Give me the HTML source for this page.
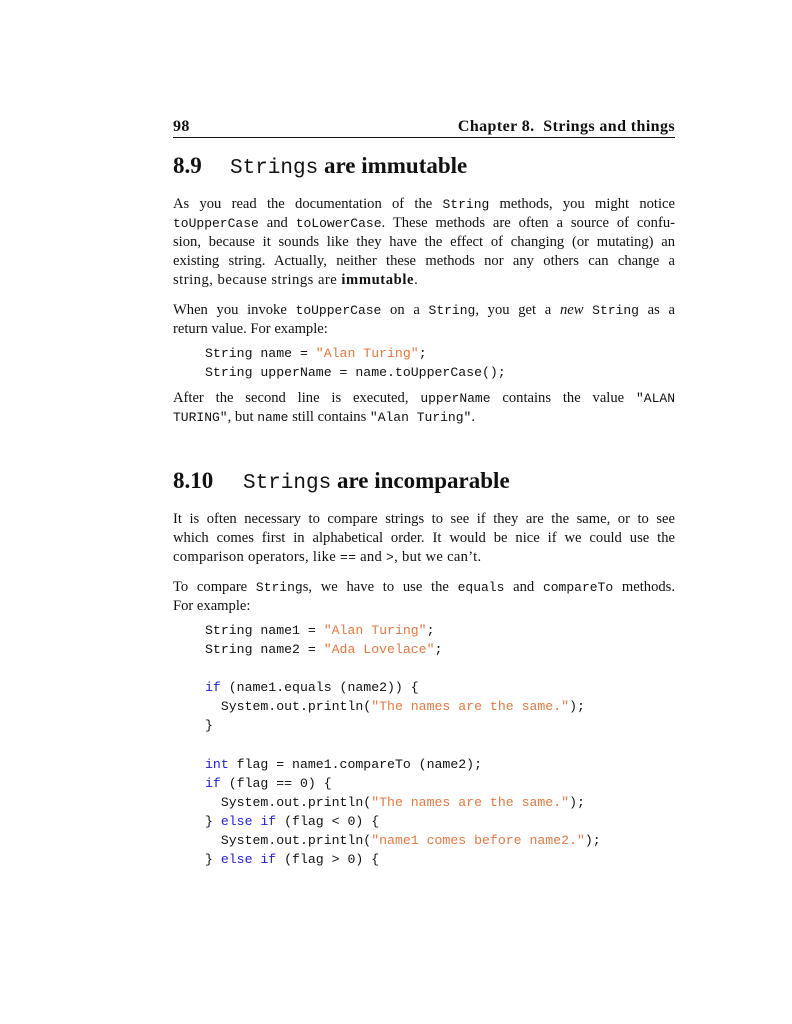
<!DOCTYPE html>
<html><head><meta charset="utf-8"><style>
html,body{margin:0;padding:0;background:#fff;}
body{width:792px;height:1024px;position:relative;overflow:hidden;color:#111;font-family:"Liberation Serif",serif;}
.l{position:absolute;left:173px;width:502px;height:19px;line-height:19px;font-size:14.6px;white-space:nowrap;}
.j{text-align:justify;text-align-last:justify;white-space:normal;}
code,.c{font-family:"Liberation Mono",monospace;font-size:13px;}
b{letter-spacing:0.6px;}
.c{position:absolute;left:205px;height:19px;line-height:19px;white-space:pre;font-size:13.2px;color:#111;}
.k{color:#2020e0;}
.s{color:#e8773f;}
.h{position:absolute;left:173px;font-weight:bold;font-size:23px;line-height:26px;white-space:pre;}
.h code{font-size:21px;font-weight:normal;}
</style></head><body>
<div class="l" style="top:117px;font-weight:bold;font-size:16px;letter-spacing:0.4px;"><span>98</span><span style="position:absolute;right:0">Chapter 8.&nbsp; Strings and things</span></div>
<div style="position:absolute;left:173px;width:502px;top:137px;height:1px;background:#111"></div>

<div class="h" style="top:153px;">8.9<span style="position:absolute;left:57px"><code>Strings</code> are immutable</span></div>

<div class="l j" style="top:195px;">As you read the documentation of the <code>String</code> methods, you might notice</div>
<div class="l j" style="top:214px;"><code>toUpperCase</code> and <code>toLowerCase</code>. These methods are often a source of confu-</div>
<div class="l j" style="top:233px;">sion, because it sounds like they have the effect of changing (or mutating) an</div>
<div class="l j" style="top:252px;">existing string. Actually, neither these methods nor any others can change a</div>
<div class="l" style="top:271px;letter-spacing:0.5px;">string, because strings are <b>immutable</b>.</div>

<div class="l j" style="top:301px;">When you invoke <code>toUpperCase</code> on a <code>String</code>, you get a <i>new</i> <code>String</code> as a</div>
<div class="l" style="top:320px;">return value. For example:</div>
<div class="c" style="top:344px;">String name = <span class="s">"Alan Turing"</span>;</div>
<div class="c" style="top:363px;">String upperName = name.toUpperCase();</div>
<div class="l j" style="top:389px;">After the second line is executed, <code>upperName</code> contains the value <code>"ALAN</code></div>
<div class="l" style="top:408px;"><code>TURING"</code>, but <code>name</code> still contains <code>"Alan Turing"</code>.</div>

<div class="h" style="top:468px;">8.10<span style="position:absolute;left:70px"><code>Strings</code> are incomparable</span></div>

<div class="l j" style="top:510px;">It is often necessary to compare strings to see if they are the same, or to see</div>
<div class="l j" style="top:529px;">which comes first in alphabetical order. It would be nice if we could use the</div>
<div class="l" style="top:548px;letter-spacing:0.3px;">comparison operators, like <code>==</code> and <code>&gt;</code>, but we can’t.</div>
<div class="l j" style="top:578px;">To compare <code>String</code>s, we have to use the <code>equals</code> and <code>compareTo</code> methods.</div>
<div class="l" style="top:597px;">For example:</div>

<div class="c" style="top:621px;">String name1 = <span class="s">"Alan Turing"</span>;</div>
<div class="c" style="top:640px;">String name2 = <span class="s">"Ada Lovelace"</span>;</div>
<div class="c" style="top:678px;"><span class="k">if</span> (name1.equals (name2)) {</div>
<div class="c" style="top:697px;">  System.out.println(<span class="s">"The names are the same."</span>);</div>
<div class="c" style="top:716px;">}</div>
<div class="c" style="top:755px;"><span class="k">int</span> flag = name1.compareTo (name2);</div>
<div class="c" style="top:774px;"><span class="k">if</span> (flag == 0) {</div>
<div class="c" style="top:793px;">  System.out.println(<span class="s">"The names are the same."</span>);</div>
<div class="c" style="top:812px;">} <span class="k">else if</span> (flag &lt; 0) {</div>
<div class="c" style="top:831px;">  System.out.println(<span class="s">"name1 comes before name2."</span>);</div>
<div class="c" style="top:850px;">} <span class="k">else if</span> (flag &gt; 0) {</div>
</body></html>
